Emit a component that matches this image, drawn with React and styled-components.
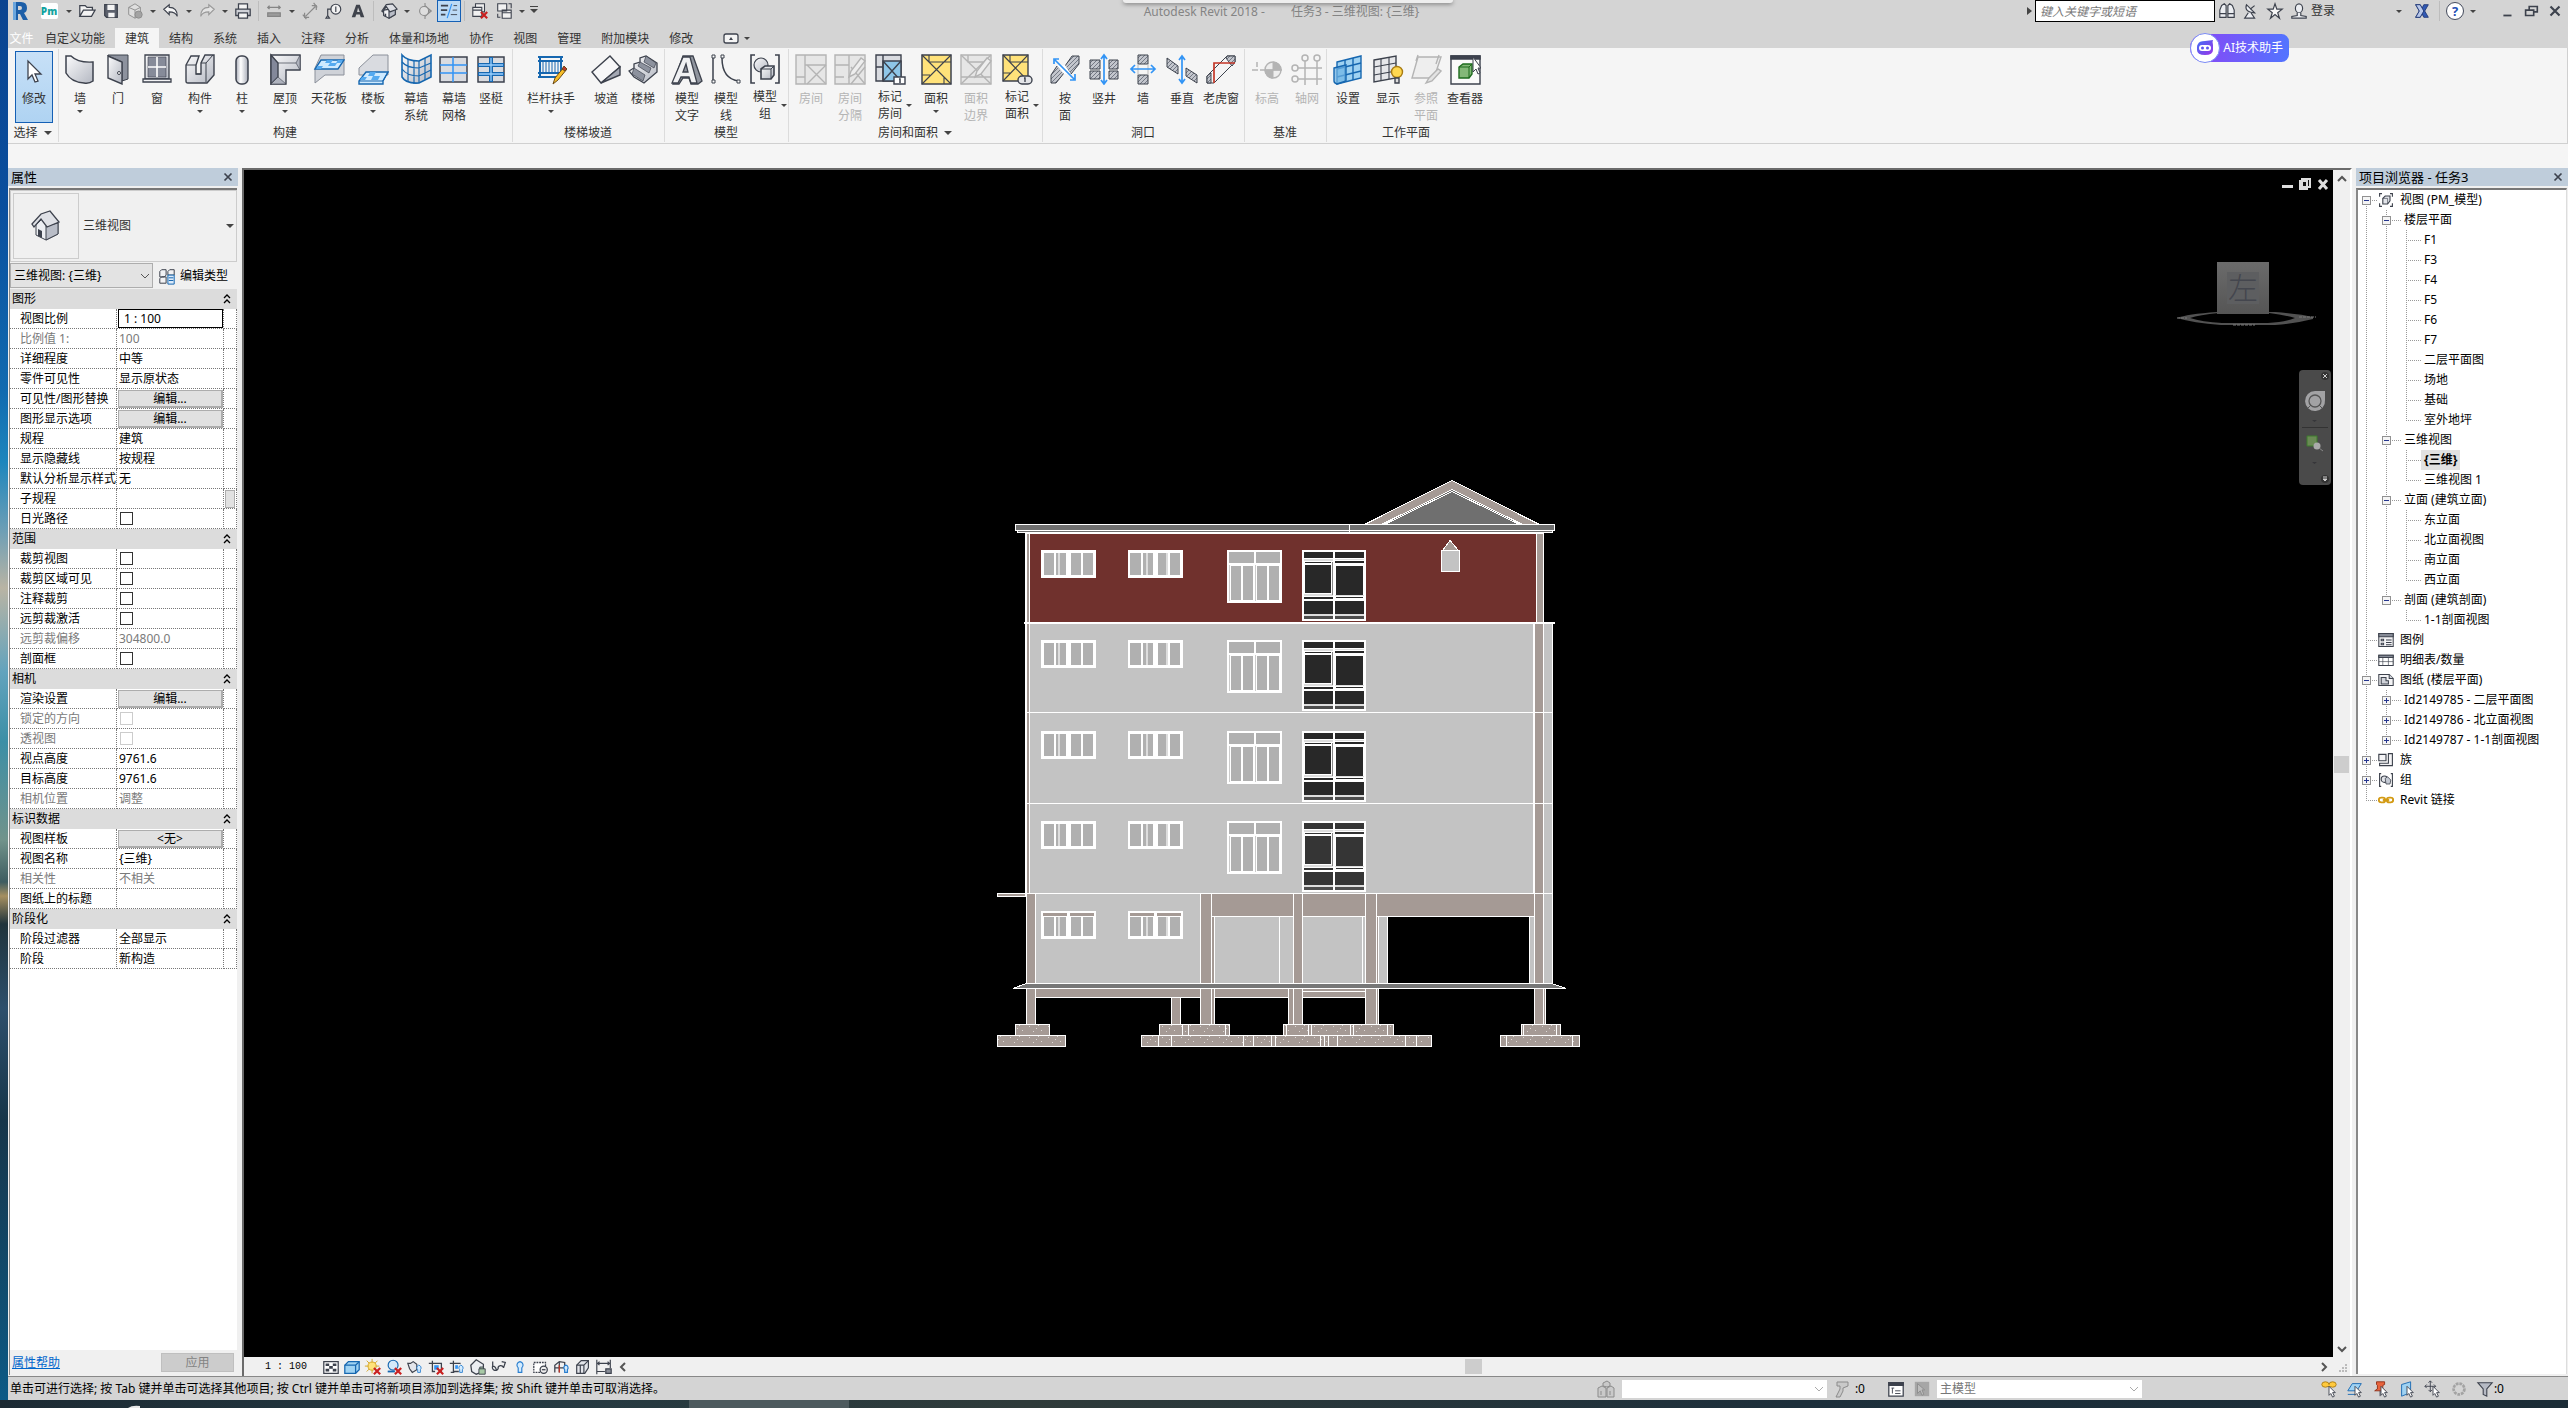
import React, { useState } from 'react'
import styled, { createGlobalStyle, css } from 'styled-components'

const line = '#3d424d'
const off = '#b4b4b4'
const blue = '#1667b0'

/* ---------- ribbon icons, 32 x 32 ---------- */

const pencil = (
  <g>
    <path d="M18 31l2-6 9-11 3 2-9 11z" fill="#f6bd27" stroke="#6b4a16" />
    <path d="M27 16l3 2 2-2-3-3z" fill="#c03a2b" stroke="#6b4a16" />
  </g>
)

const greyPencil = <path d="M15 24l2-6 10-13 4 3-10 13z" fill="#eee" stroke={off} />

const hatch = (d) => <path d={d} fill="url(#hatch)" stroke={line} />

const ribbonIcons = {
  modify: <path d="M10 8v18l4-4 3 7 3-1-3-7h6z" fill="#fff" stroke={line} strokeWidth="1.3" />,
  wall: <path d="M2 3h5q7 7 22 6v19q-4 3-9 2Q7 29 2 20z" fill="url(#steel)" stroke={line} strokeWidth="1.5" />,
  door: (
    <g stroke={line}>
      <path d="M6 2h20v24l-6 2V9L6 3z" fill="#8d929e" />
      <path d="M6 3l14 6v22L6 25z" fill="url(#steel)" strokeWidth="1.4" />
      <circle cx="17" cy="20" r="1.5" fill="#fff" />
    </g>
  ),
  window: (
    <g stroke={line} strokeWidth="1.3">
      <path d="M4 2h24v24H4z" fill="url(#steel)" />
      <path d="M7 4h18v20H7z" fill="#868b99" strokeWidth=".6" />
      <path d="M16 4v20M7 14h18" stroke="#fff" strokeWidth="1.6" />
      <path d="M2 26h28v3H2z" fill="#f3f3f5" />
    </g>
  ),
  component: (
    <g stroke={line} strokeWidth="1.4">
      <path d="M2 12l5-9h8l-3 9v9h5V10l4-8h9v20l-7 8H4q-2 0-2-2z" fill="url(#steel)" />
      <path d="M12 21h5M17 10h5l7-8M22 10v19M2 12h10" fill="none" strokeWidth="1" />
    </g>
  ),
  column: <rect x="10" y="3" width="12" height="28" rx="5" fill="url(#pillar)" stroke={line} strokeWidth="1.5" />,
  roof: (
    <g stroke={line} strokeWidth="1.4">
      <path d="M2 2h29v15H17v14H2z" fill="url(#steel)" />
      <path d="M2 2l7 8v14l-7 7z" fill="#83889a" />
      <path d="M2 31l7-7 8 7zM31 2v15l-4-7z" fill="#aeb2bd" strokeWidth=".6" />
      <path d="M9 10h18" strokeWidth=".7" />
    </g>
  ),
  ceiling: (
    <g>
      <path d="M2 15L8 2h23v20H12L2 30z" fill="#cfd2d8" stroke="#8b909a" />
      <path d="M8 7h23l-6 9H2z" fill="#cfeaff" stroke={blue} strokeWidth="1.4" />
      <path d="M14 7h6l-2 3h6l-2 3h-7l2-3h-5zM5 13h5l-2 3H3zM25 7h5l-2 3h-5z" fill="#55aaf0" />
    </g>
  ),
  floor: (
    <g>
      <path d="M2 22V15L16 2h15v20z" fill="#d9dbe0" stroke="#8b909a" />
      <path d="M9 19h22l-5 9v3H2v-3z" fill="#cfeaff" stroke={blue} strokeWidth="1.4" />
      <path d="M2 28h24l5-9" fill="none" stroke={blue} />
      <path d="M13 19h6l-2 4h6l-2 4h-7l2-4h-5zM5 24h5l-2 3H3z" fill="#55aaf0" />
    </g>
  ),
  curtainSystem: (
    <g fill="none" stroke={blue} strokeWidth="1.6">
      <path d="M2 2q5 6 17 6l12-6v22l-12 6Q6 31 2 24z" fill="url(#steel)" />
      <path d="M2 9q5 6 17 6l12-5M2 16q5 7 17 7l12-6M8 6v22M14 8v23M19 8v22M25 5v22" strokeWidth="1.2" />
    </g>
  ),
  curtainGrid: (
    <g>
      <path d="M2 4h27v25H2z" fill="#d9dbe0" stroke={line} strokeWidth="1.5" />
      <path d="M15 4v25M2 12h27M2 20h27" stroke="#3294f5" strokeWidth="1.5" />
    </g>
  ),
  mullion: (
    <g>
      <path d="M3 4h26v25H3z" fill="#d9dbe0" stroke={line} strokeWidth="1.5" />
      <path d="M3 12h26M3 21h26M16 4v25" stroke={blue} strokeWidth="4" />
      <path d="M4 12h24M4 21h24M16 5v23" stroke="#9ad0ff" strokeWidth="1.3" />
    </g>
  ),
  railing: (
    <g>
      <path d="M3 4h25M3 8h25M3 20h25M3 24h21M5 4v20M26 4v16" stroke={blue} strokeWidth="2" />
      <path d="M8 8v12M11 8v12M14 8v12M17 8v12M20 8v12M23 8v12" stroke={blue} />
      {pencil}
    </g>
  ),
  ramp: (
    <g stroke={line} strokeWidth="1.4">
      <path d="M2 19L20 3l10 11-19 16z" fill="#f7f7f8" />
      <path d="M30 14v8l-19 8z" fill="#a4a8b3" />
    </g>
  ),
  stair: (
    <g stroke={line} strokeWidth="1.3">
      <path d="M2 18l5-3v-4l6-2V5l6-2 11 7v9L17 30 7 24z" fill="url(#steel)" />
      <path d="M19 3l10 7-2 5-10-6zM13 9l11 6-2 5-11-7zM7 15l11 7-2 6-11-7z" fill="#8d929e" strokeWidth=".7" />
    </g>
  ),
  modelText: (
    <g stroke={line} strokeWidth="1.3">
      <path d="M12 3h10l9 25-4 3h-7l-2-6h-6l-4 6H2z" fill="#90959f" />
      <path d="M12 4h7l7 26h-6l-2-6h-8l-3 6H1z" fill="#f0f1f3" />
      <path d="M12 19l3-8 2 8z" fill="#90959f" />
    </g>
  ),
  modelLine: (
    <g fill="none" stroke={line} strokeWidth="1.5">
      <path d="M3 5v23M12 5q0 21 17 23" />
      <path d="M2 2h3v3H2zM2 27h3v3H2zM11 2h3v3h-3zM27 27h3v3h-3z" fill="#fff" strokeWidth="1" />
    </g>
  ),
  modelGroup: (
    <g fill="none" stroke={line} strokeWidth="1.6">
      <path d="M6 2H2v28h4M26 2h4v28h-4" />
      <circle cx="12" cy="12" r="7" fill="url(#steel)" strokeWidth="1.2" />
      <path d="M12 16l4-3h9v9l-3 4H12z" fill="url(#steel)" />
      <path d="M12 16h10v10M22 16l3-3" strokeWidth="1" />
    </g>
  ),
  room: (
    <g fill="none" stroke={off} strokeWidth="1.4">
      <path d="M1 2h30v29H1z" fill="#e6e6e6" />
      <path d="M10 2v29M1 24h9M10 12h21M12 12l19 19M31 12L12 31" />
    </g>
  ),
  roomSplit: (
    <g fill="none" stroke={off} strokeWidth="1.4">
      <path d="M1 2h30v29H1z" fill="#e6e6e6" />
      <path d="M1 12h14M15 2v29M1 24h9M17 14l14 17M31 14L17 31" />
      {greyPencil}
    </g>
  ),
  tagRoom: (
    <g fill="none" stroke={line} strokeWidth="1.4">
      <path d="M2 2h25v26H2z" fill="#d9dbe0" />
      <path d="M9 8h18v20H9z" fill="#8ec6e8" />
      <path d="M9 8l18 20M27 8L9 28M9 2v26M2 14h7" />
      <path d="M20 24h11v7H20z" fill="#fff" />
      <path d="M25 26h1v4" strokeWidth="1.5" />
    </g>
  ),
  area: (
    <g fill="none" stroke={line} strokeWidth="1.5">
      <path d="M2 2h29v29H2z" fill="#ffe27a" />
      <path d="M2 2l29 29M31 2L2 31M9 2v7M9 9h22M2 22h8M24 24v7" strokeWidth="1.1" />
    </g>
  ),
  areaBoundary: (
    <g fill="none" stroke={off} strokeWidth="1.4">
      <path d="M1 2h30v29H1z" fill="#e6e6e6" />
      <path d="M1 2l30 29M31 2L1 31M8 2v7h23M1 24h30" />
      {greyPencil}
    </g>
  ),
  tagArea: (
    <g fill="none" stroke={line} strokeWidth="1.4">
      <path d="M2 2h25v26H2z" fill="#ffe27a" />
      <path d="M2 2l25 26M27 2L2 28M9 2v7h18M2 20h7" strokeWidth="1.1" />
      <rect x="17" y="23" width="14" height="8" rx="4" fill="#e4e5e8" />
      <path d="M23 25h1v4" strokeWidth="1.4" />
    </g>
  ),
  byFace: (
    <g>
      {hatch('M16 13L23 3h7v8l-8 10zM2 30v-8l6-9 7 7-8 10z')}
      <path d="M8 13l8-1 6 9h-7z" fill="#fff" />
      <path d="M6 7l19 19M5 11V6h5M26 21v6h-5" fill="none" stroke="#3294f5" strokeWidth="1.7" />
    </g>
  ),
  shaft: (
    <g>
      {hatch('M2 7h10v9H2zM21 7h9v9h-9zM2 18h10v8H2zM21 18h9v8h-9z')}
      <path d="M16 3v27M13 6l3-4 3 4M13 27l3 4 3-4" fill="none" stroke="#3294f5" strokeWidth="1.7" />
    </g>
  ),
  wallOpening: (
    <g>
      {hatch('M11 2h10v9H11zM11 22h10v9H11z')}
      <path d="M11 11v11M21 11v11" stroke="#bbb" />
      <path d="M4 16h24M8 12l-4 4 4 4M24 12l4 4-4 4" fill="none" stroke="#3294f5" strokeWidth="1.7" />
    </g>
  ),
  vertical: (
    <g>
      {hatch('M1 5l11 8v8L1 14zM20 15l11 7v8l-11-7z')}
      <path d="M16 4v25M13 7l3-4 3 4M13 26l3 4 3-4" fill="none" stroke="#3294f5" strokeWidth="1.7" />
    </g>
  ),
  dormer: (
    <g>
      <path d="M2 30v-7L22 3h8v6L9 30z" fill="#f4f4f5" stroke={line} />
      {hatch('M22 3h8v6l-3 4-6-8zM2 30v-7l4-3v10z')}
      <path d="M30 10H9v20" fill="none" stroke="#c33526" strokeWidth="1.7" />
    </g>
  ),
  level: (
    <g stroke={off}>
      <circle cx="22" cy="17" r="8" fill="#eee" strokeWidth="1.4" />
      <path d="M22 17V9a8 8 0 0 1 8 8zM22 17v8a8 8 0 0 1-8-8z" fill={off} />
      <path d="M1 17h6M9 17h22M6 9v5" strokeWidth="1.5" />
    </g>
  ),
  grid: (
    <g fill="none" stroke={off} strokeWidth="1.5">
      <circle cx="14" cy="5" r="3" />
      <circle cx="26" cy="5" r="3" />
      <circle cx="4" cy="15" r="3" />
      <circle cx="4" cy="26" r="3" />
      <path d="M14 8v24M26 8v24M7 15h24M7 26h24" />
    </g>
  ),
  setPlane: (
    <g fill="none" stroke={blue} strokeWidth="1.4">
      <path d="M5 9l24-6v22L5 31z" fill="#9fd2f2" />
      <path d="M13 7v22M21 5v22M5 16l24-6M5 24l24-6" />
      <path d="M2 15l12-3v16L5 31q-3-1-3-3z" fill="#6fb3e4" fillOpacity=".7" />
    </g>
  ),
  showPlane: (
    <g fill="none" stroke={line} strokeWidth="1.4">
      <path d="M2 7l22-4v22L2 29z" fill="#e6e7ea" />
      <path d="M9 6v22M17 4v22M2 14l22-4M2 22l22-4" strokeWidth="1.1" />
      <circle cx="25" cy="19" r="5.5" fill="#ffd850" stroke="#a87b12" />
      <path d="M23 25h4v5h-4z" fill="#ddd" />
    </g>
  ),
  refPlane: (
    <g fill="none" stroke={off} strokeWidth="1.4">
      <path d="M8 4h23l-7 21H2z" fill="#eee" />
      <path d="M8 2l-2 6M29 2l-3 9" />
      <path d="M16 30l3-5 9-9 3 2-9 10z" fill="#e3e3e3" />
    </g>
  ),
  viewer: (
    <g fill="none" stroke={line} strokeWidth="1.4">
      <path d="M2 3h29v28H2z" fill="#fafafa" />
      <path d="M2 3h29v3H2z" fill={line} />
      <path d="M10 14l4-3h9v10l-3 4H10z" fill="#83b878" stroke="#1d6b1d" />
      <path d="M10 14h10v11M20 14l3-3" stroke="#1d6b1d" strokeWidth="1" />
      <path d="M24 4v15l3-3 2 5 2-1-2-5h3z" fill="#fff" strokeWidth="1" />
    </g>
  ),
}

/* ---------- small icons, 20 x 20 ---------- */

const redX = <path d="M11 11l7 7M18 11l-7 7" stroke="#c92020" strokeWidth="2.4" />
const arrowCursor = <path d="M10 7v10l2-2 2 4 2-1-2-4h3z" fill="#fff" stroke={line} />
const lamp = <path d="M14 8a3 3 0 0 1 2 5v3h-3v-3a3 3 0 0 1 1-5z" fill="#d4ecff" stroke="#2a7fcf" />

const smallIcons = {
  revit: (
    <g>
      <path d="M3 1h8q6 0 6 6 0 4-3 5l4 7h-5l-3-6H8v6H3z" fill="#1d5fa8" />
      <path d="M8 5h2q2 0 2 2t-2 2H8z" fill="#d4d4d4" />
      <path d="M3 1h3v18H3z" fill="#6ba6dd" />
    </g>
  ),
  open: <path d="M2 16V4h6l2 2h6v3M2 16l4-7h13l-4 7z" fill="#f3f3f3" stroke={line} strokeWidth="1.4" />,
  save: (
    <g>
      <path d="M3 3h14v14H5l-2-2z" fill="#5b606c" stroke={line} strokeWidth="1.4" />
      <path d="M6 3h8v6H6zM7 12h7v5H7z" fill="#f4f4f4" />
    </g>
  ),
  sync: (
    <g stroke="#8b8b8b" fill="#dedede">
      <path d="M3 6l7-4 6 4v8l-6 4-7-4z" />
      <path d="M3 6l7 3 6-3M10 9v9" fill="none" />
      <circle cx="14" cy="14" r="4" fill="#a3a3a3" />
    </g>
  ),
  undo: <path d="M2 8l6-5v3q9 0 9 10-2-5-9-5v3z" fill="#f6f6f6" stroke={line} strokeWidth="1.3" />,
  redo: <path d="M18 8l-6-5v3q-9 0-9 10 2-5 9-5v3z" fill="#e4e4e4" stroke="#9a9a9a" strokeWidth="1.3" />,
  print: (
    <g stroke={line} strokeWidth="1.4" fill="#f4f4f4">
      <path d="M5 8V2h10v6" />
      <path d="M2 8h16v7H2z" fill="#d0d2d8" />
      <path d="M5 12h10v6H5z" />
    </g>
  ),
  measure: <path d="M3 6h14M5 4L3 6l2 2M15 4l2 2-2 2M3 12h14v4H3z" fill="#9b9b9b" stroke="#858585" strokeWidth="1.3" />,
  dimension: <path d="M5 16L16 5M4 12v5h5M12 4h5v5M2 14l4 5M14 1l4 5" fill="none" stroke="#8a8a8a" strokeWidth="1.3" />,
  tag: (
    <g fill="none" stroke={line} strokeWidth="1.3">
      <circle cx="12" cy="8" r="5.5" fill="#f2f2f2" />
      <path d="M12 5v6M7 8H3v8M1 18l2-3 2 3z" />
    </g>
  ),
  bigA: <path d="M8 3h4l5 14h-4l-1-3H8l-1 3H3zM9 11h3l-2-5z" fill="#3f434c" fillRule="evenodd" />,
  home: (
    <g stroke={line} fill="#f1f1f3" strokeWidth="1.3" strokeLinejoin="round">
      <path d="M4 9v6l6 3 7-4V7z" />
      <path d="M10 10v8l7-4V7z" fill="#b9bdc7" />
      <path d="M2 10l5-7 7-1 5 6-8 3-4-6-4 6z" fill="#dcdee3" />
      <path d="M6 13v3" strokeWidth="1.8" />
    </g>
  ),
  section: (
    <g stroke="#8b8b8b" strokeWidth="1.2">
      <path d="M10 1v3M10 16v3M10 4l7 6-7 6z" fill="#a6a6a6" />
      <circle cx="9" cy="10" r="5" fill="#dedede" />
    </g>
  ),
  thin: (
    <g strokeWidth="2" stroke={line}>
      <path d="M1 4h8M1 9h7M1 14h5" />
      <path d="M15 4h4M14 9h5M12 14h7" strokeWidth="1" />
      <path d="M13 2L8 18" stroke="#3294f5" strokeWidth="1.3" />
    </g>
  ),
  hide: (
    <g fill="#f1f1f1" stroke={line} strokeWidth="1.2">
      <path d="M5 2h10v9H5z" />
      <path d="M2 6h10v10H2zM2 9h10" />
      {redX}
    </g>
  ),
  switchWin: (
    <g fill="#f1f1f1" stroke={line} strokeWidth="1.2">
      <path d="M3 2h10v8H3zM8 9h10v9H8zM8 12h10" />
      <path d="M15 2h3v5M3 13v4h3" fill="none" />
    </g>
  ),
  binoculars: (
    <g fill="#eceef2" stroke={line} strokeWidth="1.3">
      <path d="M4 4l3-2 2 2v13H2V9zM16 4l-3-2-2 2v13h7V9z" />
      <path d="M2 13h7M11 13h7" />
    </g>
  ),
  satellite: (
    <g fill="#eceef2" stroke={line} strokeWidth="1.3">
      <path d="M5 3q-3 8 9 9zM9 8l5-4M7 12l-4 6h11l-4-6" />
    </g>
  ),
  star: <path d="M10 2l2 6h6l-5 4 2 6-5-4-5 4 2-6-5-4h6z" fill="#f7f7f7" stroke={line} strokeWidth="1.3" />,
  user: (
    <g fill="#eceef2" stroke={line} strokeWidth="1.3">
      <ellipse cx="10" cy="7" rx="4" ry="5" />
      <path d="M8 12v3l-6 1v2h16v-2l-6-1v-3" />
    </g>
  ),
  exchange: (
    <g>
      <path d="M3 3h5l2 4 2-4h5l-4 7 4 7h-5l-2-4-2 4H3l4-7z" fill="#3159b4" stroke="#233a78" />
      <path d="M3 3h5l4 7-4 7H3l4-7z" fill="#b9c8ea" stroke="#233a78" />
    </g>
  ),
  min: <path d="M6 14h9v2H6z" fill={line} />,
  restore: <path d="M4 9h9v6H4zM8 9V5h9v6h-4" fill="none" stroke={line} strokeWidth="1.8" />,
  close: <path d="M5 5l10 10M15 5L5 15" stroke={line} strokeWidth="2.4" />,
  toggle: (
    <g>
      <rect x="3" y="6" width="14" height="9" rx="2" fill="#f4f4f4" stroke={line} strokeWidth="1.3" />
      <path d="M8 12l2-3 2 3z" fill={line} />
    </g>
  ),
  editType: (
    <g fill="#f2f2f4" stroke={line} strokeWidth="1.1">
      <path d="M2 5l2-2h5v6l-2 2H2zM11 5l2-2h5v6h-7zM2 13l2-2h5v7H2z" />
      <path d="M11 9h7v10h-7z" fill="#dceafa" stroke={blue} />
      <path d="M12 12h5M12 15h5" stroke={blue} />
    </g>
  ),
  views: (
    <g fill="none" stroke={line} strokeWidth="1.4">
      <path d="M5 2H2v4M15 2h3v4M5 18H2v-4M15 18h3v-4" />
      <path d="M6 8l3-3h6v6l-3 4H6z" fill="#e3e5ea" />
      <path d="M6 8h6v7" strokeWidth=".8" />
    </g>
  ),
  legend: (
    <g fill="#f3f3f5" stroke={line} strokeWidth="1.3">
      <path d="M1 2h18v16H1z" />
      <path d="M1 2h18v4H1z" fill="#868b96" />
      <path d="M4 9h3v2H4zM4 14h3v2H4zM10 10h7M10 13h7M10 16h7" />
    </g>
  ),
  schedule: (
    <g fill="#fff" stroke={line} strokeWidth="1.3">
      <path d="M1 4h18v13H1z" />
      <path d="M1 4h18v3H1z" fill="#868b96" />
      <path d="M1 12h18M6 7v10M13 7v10" strokeWidth=".8" />
    </g>
  ),
  sheet: (
    <g fill="#f3f3f5" stroke={line} strokeWidth="1.3">
      <path d="M1 3h13l5 5v9H1z" />
      <path d="M4 7h6v4h3v4H4zM14 3v5h5" fill="#d0d3da" />
    </g>
  ),
  family: (
    <g fill="#f3f3f5" stroke={line} strokeWidth="1.4">
      <path d="M1 3h9v8H1zM13 2h5v15H2v-3h11z" />
    </g>
  ),
  group: (
    <g fill="none" stroke={line} strokeWidth="1.4">
      <path d="M4 2H2v16h2M16 2h2v16h-2" />
      <circle cx="8" cy="9" r="4" fill="#e3e5ea" />
      <path d="M9 8l3-2 4 4-1 5h-5z" fill="#c5cad4" strokeWidth="1" />
    </g>
  ),
  link: (
    <g fill="none" stroke="#d39a13" strokeWidth="2.4">
      <rect x="1" y="7" width="8" height="6" rx="3" />
      <rect x="11" y="7" width="8" height="6" rx="3" />
      <path d="M6 10h8" />
    </g>
  ),
  detail: (
    <g>
      <path d="M2 4h16v13H2z" fill="#fff" stroke={line} strokeWidth="1.4" />
      <path d="M4 6h4v3H4zM12 6h4v3h-4zM8 9h4v3H8zM4 12h4v3H4zM12 12h4v3h-4z" fill={line} />
    </g>
  ),
  style: (
    <g fill="#9fd2f2" stroke={blue} strokeWidth="1.4">
      <path d="M2 8l4-4h12v9l-4 4H2z" />
      <path d="M2 8h12v9M14 8l4-4" fill="none" />
    </g>
  ),
  sun: (
    <g>
      <path d="M9 1v16M1 9h16M3 3l12 12M15 3L3 15" stroke="#d3a018" />
      <circle cx="9" cy="9" r="4.5" fill="#ffe27a" stroke="#d3a018" />
      {redX}
    </g>
  ),
  shadow: (
    <g>
      <circle cx="9" cy="8" r="5.5" fill="#d4e9fa" stroke={blue} strokeWidth="1.3" />
      <path d="M3 15h8" stroke={blue} strokeWidth="2" />
      {redX}
    </g>
  ),
  render: (
    <g>
      <path d="M2 6h3l3-2 4 3v6l-5 3-3-4z" fill="#e3e5ea" stroke={line} strokeWidth="1.3" />
      {lamp}
    </g>
  ),
  crop: (
    <g>
      <path d="M2 6h14v10M6 3v12h3" fill="none" stroke={line} strokeWidth="1.4" />
      <path d="M8 8h5v5H8z" fill="#3294f5" />
      {redX}
    </g>
  ),
  cropShow: (
    <g>
      <path d="M2 6h12M6 3v12h6M3 16h4" fill="none" stroke={line} strokeWidth="1.4" />
      <path d="M8 8h3v4H8z" fill="#3294f5" />
      {lamp}
    </g>
  ),
  lockView: (
    <g stroke={line}>
      <path d="M2 8l6-6 8 5v8l-8 3-5-3z" fill="#eceef2" strokeWidth="1.4" />
      <path d="M11 12h7v6h-7zM12 12v-2h4v2" fill="#a7c9a5" />
    </g>
  ),
  glasses: <path d="M3 4v5a3 3 0 1 0 6 3 3 3 0 1 1 6-1l2-6-4-1M3 9q3 0 4 4" fill="none" stroke={line} strokeWidth="1.4" />,
  bulb: <path d="M10 4a4 4 0 0 1 2 7v5H8v-5a4 4 0 0 1 2-7z" fill="#d4ecff" stroke="#2a7fcf" strokeWidth="1.3" />,
  worksharing: (
    <g fill="none" stroke={line} strokeWidth="1.4">
      <path d="M2 5h13v11H2z" fill="#fff" strokeDasharray="2 1" />
      <circle cx="13" cy="13" r="4" fill="#eee" />
      <path d="M11 13h4" />
    </g>
  ),
  analytic: (
    <g fill="none" stroke={line} strokeWidth="1.4">
      <path d="M2 16V8l5-4 6 1v9M2 11h11M7 5v11" />
      <path d="M7 8v8" stroke="#c33526" />
      {lamp}
    </g>
  ),
  highlight: (
    <g fill="#e3e5ea" stroke={line} strokeWidth="1.3">
      <path d="M3 8l5-5h8v8l-4 6H3z" />
      <path d="M3 8h8v9M7 8v9M11 8l5-5" fill="none" />
    </g>
  ),
  constraint: (
    <g fill="none" stroke={line} strokeWidth="1.3">
      <path d="M2 2v16M17 2v9M2 6h15M5 4L3 6l2 2M14 4l2 2-2 2M2 15h9" />
      <path d="M12 12h6v5h-6z" fill="#8a8e98" />
    </g>
  ),
  workset: (
    <g fill="#c9c9c9" stroke="#8b8b8b">
      <path d="M2 9l4-2 4 2v9H2zM11 9l4-2 3 2v9h-7zM7 4l4-2 3 2v3l-3 1-4-1z" />
      <path d="M5 12v4M14 12v4" />
    </g>
  ),
  editable: <path d="M4 3h11v4l-5 2v3l-3 6H3l4-8V7H4z" fill="#c9c9c9" stroke="#8b8b8b" />,
  options: (
    <g fill="#fff" stroke={line} strokeWidth="1.4">
      <path d="M2 3h16v15H2z" />
      <path d="M2 3h16v3H2z" fill={line} />
      <path d="M5 9h3M9 12h6M9 15h6M6 9v6" strokeWidth="1" />
    </g>
  ),
  pickOption: (
    <g>
      <path d="M2 2h16v16H2z" fill="#a6a6a6" />
      <path d="M5 4v11l3-3 2 5 2-1-2-5h3z" fill="#bdbdbd" stroke="#8b8b8b" />
    </g>
  ),
  selLink: (
    <g>
      <path d="M2 5q0-3 4-3t4 3q0-3 4-3t4 3-4 3l-4-1-4 1q-4 0-4-3z" fill="#ffc93c" stroke="#a87b12" />
      {arrowCursor}
    </g>
  ),
  selUnder: (
    <g>
      <path d="M2 12l5-8h10l-5 8zM2 16h9" fill="#9fd2f2" stroke={blue} />
      {arrowCursor}
    </g>
  ),
  selPin: (
    <g>
      <path d="M5 2h9v3l-2 1v4l3 2H3l3-2V6L5 5z" fill="#e8633c" stroke="#8d2f16" />
      <path d="M9 12v6" stroke={line} />
      {arrowCursor}
    </g>
  ),
  selFace: (
    <g>
      <path d="M4 5l10-3v12L4 18z" fill="#9fd2f2" stroke={blue} />
      {arrowCursor}
    </g>
  ),
  drag: (
    <g>
      <path d="M7 1v12M1 7h12M5 3l2-2 2 2M5 11l2 2 2-2M3 5L1 7l2 2M11 5l2 2-2 2" fill="none" stroke={line} />
      {arrowCursor}
    </g>
  ),
  ring: <circle cx="10" cy="10" r="6" fill="none" stroke="#a3a3a3" strokeWidth="3" strokeDasharray="3 1" />,
  filter: <path d="M2 3h16l-6 7v8l-4-2v-6z" fill="#b6bac4" stroke={line} strokeWidth="1.2" />,
}

const SmallIcon = ({ name, size = 18 }) => (
  <svg width={size} height={size} viewBox="0 0 20 20" aria-hidden="true">
    {smallIcons[name]}
  </svg>
)

/* ---------- data ---------- */

const quickAccess = [
  'open', 'save', 'sync', '>', 'undo', '>', 'redo', '>', 'print', '|', 'measure', '>', 'dimension', 'tag', 'bigA', '|',
  'home', '>', 'section', '*thin', '|', 'hide', 'switchWin', '>',
]

const tabs = [
  '自定义功能', '建筑', '结构', '系统', '插入', '注释', '分析', '体量和场地', '协作', '视图', '管理', '附加模块', '修改',
]

const ribbonPanels = [
  {
    title: '构建',
    tools: [
      { icon: 'wall', text: ['墙'], w: 42, menu: true },
      { icon: 'door', text: ['门'], w: 34 },
      { icon: 'window', text: ['窗'], w: 44 },
      { icon: 'component', text: ['构件'], w: 42, menu: true },
      { icon: 'column', text: ['柱'], w: 42, menu: true },
      { icon: 'roof', text: ['屋顶'], w: 44, menu: true },
      { icon: 'ceiling', text: ['天花板'], w: 44 },
      { icon: 'floor', text: ['楼板'], w: 44, menu: true },
      { icon: 'curtainSystem', text: ['幕墙', '系统'], w: 42 },
      { icon: 'curtainGrid', text: ['幕墙', '网格'], w: 34 },
      { icon: 'mullion', text: ['竖梃'], w: 40 },
    ],
  },
  {
    title: '楼梯坡道',
    tools: [
      { icon: 'railing', text: ['栏杆扶手'], w: 76, menu: true },
      { icon: 'ramp', text: ['坡道'], w: 34 },
      { icon: 'stair', text: ['楼梯'], w: 40 },
    ],
  },
  {
    title: '模型',
    tools: [
      { icon: 'modelText', text: ['模型', '文字'], w: 44 },
      { icon: 'modelLine', text: ['模型', '线'], w: 34 },
      { icon: 'modelGroup', text: ['模型', '组'], w: 44, side: true },
    ],
  },
  {
    title: '房间和面积',
    more: true,
    tools: [
      { icon: 'room', text: ['房间'], w: 44, disabled: true },
      { icon: 'roomSplit', text: ['房间', '分隔'], w: 34, disabled: true },
      { icon: 'tagRoom', text: ['标记', '房间'], w: 46, side: true },
      { icon: 'area', text: ['面积'], w: 46, menu: true },
      { icon: 'areaBoundary', text: ['面积', '边界'], w: 34, disabled: true },
      { icon: 'tagArea', text: ['标记', '面积'], w: 48, side: true },
    ],
  },
  {
    title: '洞口',
    tools: [
      { icon: 'byFace', text: ['按', '面'], w: 44 },
      { icon: 'shaft', text: ['竖井'], w: 34 },
      { icon: 'wallOpening', text: ['墙'], w: 44 },
      { icon: 'vertical', text: ['垂直'], w: 34 },
      { icon: 'dormer', text: ['老虎窗'], w: 44 },
    ],
  },
  {
    title: '基准',
    tools: [
      { icon: 'level', text: ['标高'], w: 44, disabled: true },
      { icon: 'grid', text: ['轴网'], w: 36, disabled: true },
    ],
  },
  {
    title: '工作平面',
    last: true,
    tools: [
      { icon: 'setPlane', text: ['设置'], w: 42 },
      { icon: 'showPlane', text: ['显示'], w: 38 },
      { icon: 'refPlane', text: ['参照', '平面'], w: 38, disabled: true },
      { icon: 'viewer', text: ['查看器'], w: 40 },
    ],
  },
]

const propertyGroups = [
  {
    name: '图形',
    rows: [
      { name: '视图比例', value: '1 : 100', type: 'input' },
      { name: '比例值 1:', value: '100', disabled: true },
      { name: '详细程度', value: '中等' },
      { name: '零件可见性', value: '显示原状态' },
      { name: '可见性/图形替换', value: '编辑...', type: 'button' },
      { name: '图形显示选项', value: '编辑...', type: 'button' },
      { name: '规程', value: '建筑' },
      { name: '显示隐藏线', value: '按规程' },
      { name: '默认分析显示样式', value: '无' },
      { name: '子规程', value: '', extra: true },
      { name: '日光路径', type: 'check' },
    ],
  },
  {
    name: '范围',
    rows: [
      { name: '裁剪视图', type: 'check' },
      { name: '裁剪区域可见', type: 'check' },
      { name: '注释裁剪', type: 'check' },
      { name: '远剪裁激活', type: 'check' },
      { name: '远剪裁偏移', value: '304800.0', disabled: true },
      { name: '剖面框', type: 'check' },
    ],
  },
  {
    name: '相机',
    rows: [
      { name: '渲染设置', value: '编辑...', type: 'button' },
      { name: '锁定的方向', type: 'check', disabled: true },
      { name: '透视图', type: 'check', disabled: true },
      { name: '视点高度', value: '9761.6' },
      { name: '目标高度', value: '9761.6' },
      { name: '相机位置', value: '调整', disabled: true },
    ],
  },
  {
    name: '标识数据',
    rows: [
      { name: '视图样板', value: '<无>', type: 'button' },
      { name: '视图名称', value: '{三维}' },
      { name: '相关性', value: '不相关', disabled: true },
      { name: '图纸上的标题', value: '' },
    ],
  },
  {
    name: '阶段化',
    rows: [
      { name: '阶段过滤器', value: '全部显示' },
      { name: '阶段', value: '新构造' },
    ],
  },
]

// guides: one letter per level. I = line passes, T = branch, L = last branch, F = first, "." = empty
const tree = [
  { guides: 'F', box: '-', icon: 'views', text: '视图 (PM_模型)' },
  { guides: 'IT', box: '-', text: '楼层平面' },
  { guides: 'IIT', text: 'F1' },
  { guides: 'IIT', text: 'F3' },
  { guides: 'IIT', text: 'F4' },
  { guides: 'IIT', text: 'F5' },
  { guides: 'IIT', text: 'F6' },
  { guides: 'IIT', text: 'F7' },
  { guides: 'IIT', text: '二层平面图' },
  { guides: 'IIT', text: '场地' },
  { guides: 'IIT', text: '基础' },
  { guides: 'IIL', text: '室外地坪' },
  { guides: 'IT', box: '-', text: '三维视图' },
  { guides: 'IIT', text: '{三维}' },
  { guides: 'IIL', text: '三维视图 1' },
  { guides: 'IT', box: '-', text: '立面 (建筑立面)' },
  { guides: 'IIT', text: '东立面' },
  { guides: 'IIT', text: '北立面视图' },
  { guides: 'IIT', text: '南立面' },
  { guides: 'IIL', text: '西立面' },
  { guides: 'IL', box: '-', text: '剖面 (建筑剖面)' },
  { guides: 'I.L', text: '1-1剖面视图' },
  { guides: 'T', icon: 'legend', text: '图例' },
  { guides: 'T', icon: 'schedule', text: '明细表/数量' },
  { guides: 'T', box: '-', icon: 'sheet', text: '图纸 (楼层平面)' },
  { guides: 'IT', box: '+', text: 'Id2149785 - 二层平面图' },
  { guides: 'IT', box: '+', text: 'Id2149786 - 北立面视图' },
  { guides: 'IL', box: '+', text: 'Id2149787 - 1-1剖面视图' },
  { guides: 'T', box: '+', icon: 'family', text: '族' },
  { guides: 'T', box: '+', icon: 'group', text: '组' },
  { guides: 'L', icon: 'link', text: 'Revit 链接' },
]

const viewTools = [
  'detail', 'style', 'sun', 'shadow', 'render', 'crop', 'cropShow', 'lockView', 'glasses', 'bulb', 'worksharing',
  'analytic', 'highlight', 'constraint',
]

/* ---------- building elevation ---------- */

const pink = '#a59a95'
const concrete = '#c3c3c3'
const glass = '#b0b0b0'

const SmallWindow = ({ x, y, second, ground }) => {
  const top = ground ? 6 : 3
  const panes = second
    ? [[2, 11], [15, 3], [20, 5], [30, 8], [42, 10]]
    : [[3, 10], [15, 2], [19, 6], [30, 10], [42, 10]]
  return (
    <g transform={`translate(${x} ${y})`}>
      <rect width="55" height="28" fill="#fff" />
      {panes.map(([px, w]) => (
        <rect key={px} x={px} y={top} width={w} height={25 - top} fill={glass} />
      ))}
      <rect x={second ? 18 : 17} y={top} width="2" height={25 - top} fill="#ddd" />
      {second && <rect x="38" y={top} width="2" height={25 - top} fill="#ddd" />}
      {ground && <path d="M2 2h24v3H2zM29 2h24v3H29z" fill={pink} />}
    </g>
  )
}

const TallWindow = ({ y }) => (
  <g transform={`translate(1227 ${y})`}>
    <rect width="55" height="53" fill="#fff" />
    <path d="M2 2h25v11H2zM29 2h24v11H29zM4 16h10v34H4zM16 16h10v34H16zM30 16h10v34H30zM42 16h10v34H42z" fill={glass} />
    <path d="M2 15v36M28 15v36" stroke="#ccc" />
  </g>
)

const BalconyDoor = ({ y, tone }) => (
  <g transform={`translate(1302 ${y})`}>
    <rect width="64" height="71" fill="#fff" />
    <path d="M2 2h29v6H2zM33 2h29v6H33zM3 12h26v1H3zM33 11h29v2H33z" fill={tone} />
    <path d="M3 15h26v28H3zM34 16h27v29H34zM2 47h29v2H2zM34 47h27v1H34z" fill={tone} />
    <path d="M2 51h29v13H2zM33 51h29v13H33z" fill={tone} />
    <path d="M2 66h29v3H2zM33 66h29v3H33z" fill="#4d4d4d" />
    <path d="M2 9h29v2H2zM33 9h29v1H33zM2 44h29v2H2zM33 45h29v1H33zM2 64h60v2H2z" fill="#ddd" />
    <path d="M30 12v33" stroke="#888" />
    <path d="M32 2v67" stroke="#fff" strokeWidth="2" />
  </g>
)

const footings = [
  { x: 1015, w: 34, y: 1024, cuts: [] },
  { x: 1159, w: 70, y: 1024, cuts: [1182, 1188, 1225] },
  { x: 1283, w: 110, y: 1024, cuts: [1286, 1308, 1311, 1350, 1353, 1387] },
  { x: 1521, w: 39, y: 1024, cuts: [1523, 1556] },
  { x: 997, w: 68, y: 1035, cuts: [] },
  { x: 1141, w: 290, y: 1035, cuts: [1158, 1171, 1243, 1253, 1271, 1275, 1320, 1324, 1328, 1337, 1405, 1416] },
  { x: 1500, w: 79, y: 1035, cuts: [1506, 1572] },
]

const floorTops = [550, 640, 731, 821]

const Building = () => (
  <svg width="585" height="567" viewBox="996 480 585 567" shapeRendering="crispEdges" role="img" aria-label="左立面">
    <g stroke="#fff">
      <path d="M1365.5 524L1452 480.5 1538.5 524z" fill={pink} />
      <path d="M1382.5 524L1452 489.5 1521.5 524z" fill="#6f6f6f" />
      <path d="M1385.5 524L1452 491.5 1518.5 524" fill="none" />
      <path d="M1017.5 530.5h535v2h-535zM1015.5 524.5h539v6h-539z" fill="#6f6f6f" />
      <path d="M1349.5 524v9" />
      <path d="M1025.5 533.5h4v89h-4zM1536.5 533.5h7v89h-7z" fill={pink} />
      <path d="M1029.5 533.5h507v89h-507z" fill="#70312d" />
      <path d="M1441.5 550.5h18v21h-18z" fill={concrete} />
      <path d="M1442.5 550.5l7.5-10 8.5 10z" fill={pink} />
      <path d="M1025.5 623.5h4v270h-4z" fill={pink} />
      <path d="M1029.5 623.5h504v270h-504z" fill={concrete} />
      <path d="M1534.5 623.5h9v361h-9z" fill={pink} />
      <path d="M1543.5 623.5h9v361h-9z" fill={concrete} />
      <path d="M1026 533v360M1534 624v270" strokeWidth="2" />
      <path d="M1024 623h531" strokeWidth="2" />
      <path d="M1026 712.5h527M1026 803.5h527M1026 893.5h527" />
    </g>

    {floorTops.map((y, i) => (
      <g key={y}>
        <SmallWindow x={1041} y={y} />
        <SmallWindow x={1128} y={y} second />
        <TallWindow y={y} />
        <BalconyDoor y={y} tone={i === 3 ? '#353535' : '#282828'} />
      </g>
    ))}

    <g stroke="#fff">
      <path d="M997.5 893.5h28v3h-28z" fill={pink} />
      <path d="M1035.5 893.5h165v90h-165z" fill={concrete} />
      <path d="M1214.5 916.5h65v67h-65zM1279.5 916.5h14v67h-14z" fill={concrete} />
      <path d="M1302.5 916.5h60v67h-60zM1362.5 916.5h3v67h-3zM1378.5 916.5h9v67h-9zM1529.5 916.5h5v67h-5z" fill={concrete} />
      <path d="M1211.5 893.5h82v23h-82zM1302.5 893.5h63v23h-63zM1376.5 893.5h158v23h-158z" fill={pink} />
      <path d="M1035.5 988.5h165v9h-165zM1214.5 988.5h74v9h-74zM1302.5 988.5h63v3h-63zM1302.5 991.5h63v6h-63z" fill={pink} />
      <path d="M1026.5 893.5h9v131h-9zM1200.5 893.5h11v131h-11zM1211.5 916.5h3v108h-3z" fill={pink} />
      <path d="M1293.5 893.5h9v131h-9zM1365.5 893.5h11v131h-11zM1376.5 916.5h2v108h-2z" fill={pink} />
      <path d="M1288.5 988.5h5v36h-5zM1171.5 997.5h9v27h-9zM1534.5 988.5h9v36h-9zM1543.5 988.5h2v36h-2z" fill={pink} />
      <path d="M1026 983.5h526l14 5h-553z" fill="#777" />
      <path d="M1013 988.5h553" />
    </g>
    <SmallWindow x={1041} y={911} ground />
    <SmallWindow x={1128} y={911} second ground />

    {footings.map((f) => (
      <g key={`${f.x}-${f.y}`}>
        <rect x={f.x + 0.5} y={f.y + 0.5} width={f.w} height="11" fill="url(#speck)" stroke="#fff" />
        {f.cuts.map((c) => (
          <path key={c} d={`M${c}.5 ${f.y}v11`} stroke="#fff" />
        ))}
      </g>
    ))}
  </svg>
)

const Defs = () => (
  <HiddenSvg aria-hidden="true">
    <defs>
      <linearGradient id="steel" x1="0" y1="0" x2="1" y2="1">
        <stop offset="0" stopColor="#fbfbfc" />
        <stop offset="1" stopColor="#b4b8c2" />
      </linearGradient>
      <linearGradient id="pillar">
        <stop offset="0" stopColor="#a9adb8" />
        <stop offset=".4" stopColor="#fff" />
        <stop offset="1" stopColor="#a9adb8" />
      </linearGradient>
      <linearGradient id="robot" x1="0" y1="0" x2="1" y2="1">
        <stop offset="0" stopColor="#3f6ff5" />
        <stop offset="1" stopColor="#9b35e8" />
      </linearGradient>
      <pattern id="hatch" width="4" height="4" patternUnits="userSpaceOnUse">
        <path d="M0 0h4v4H0z" fill="#c3c6cd" />
        <path d="M0 4L4 0" stroke="#747985" />
      </pattern>
      <pattern id="speck" width="19" height="11" patternUnits="userSpaceOnUse">
        <path d="M0 0h19v11H0z" fill={pink} />
        <path d="M3 3h1v1H3zM7 8h1v1H7zM12 2h1v1h-1zM15 7h1v1h-1zM10 5h1v1h-1z" fill="#ddd8d5" />
      </pattern>
    </defs>
  </HiddenSvg>
)

/* ---------- sections ---------- */

const TitleBar = () => (
  <TitleRow>
    <QuickButton aria-label="应用程序菜单">
      <SmallIcon name="revit" size={20} />
    </QuickButton>
    <PmButton aria-label="PM">
      <PmBadge>Pm</PmBadge>
    </PmButton>
    <ArrowButton aria-label="更多">
      <Caret />
    </ArrowButton>
    {quickAccess.map((item, i) => {
      if (item === '|') return <Divider key={i} />
      if (item === '>') {
        return (
          <ArrowButton key={i} aria-label="更多">
            <Caret />
          </ArrowButton>
        )
      }
      const active = item[0] === '*'
      const name = active ? item.slice(1) : item
      return (
        <QuickButton key={i} $active={active} aria-label={name}>
          <SmallIcon name={name} />
        </QuickButton>
      )
    })}
    <ArrowButton aria-label="自定义快速访问工具栏">
      <BarCaret />
    </ArrowButton>
    <TitleText>
      <span>Autodesk Revit 2018 -</span>
      <span>任务3 - 三维视图: {'{三维}'}</span>
    </TitleText>
    <ArrowButton aria-label="展开搜索">
      <SideCaret />
    </ArrowButton>
    <SearchBox aria-label="搜索" placeholder="键入关键字或短语" />
    {['binoculars', 'satellite', 'star', 'user'].map((name) => (
      <QuickButton key={name} aria-label={name}>
        <SmallIcon name={name} />
      </QuickButton>
    ))}
    <LoginButton>登录</LoginButton>
    <ArrowButton aria-label="登录选项">
      <Caret />
    </ArrowButton>
    <ExchangeButton aria-label="exchange">
      <SmallIcon name="exchange" />
    </ExchangeButton>
    <Divider />
    <HelpButton aria-label="帮助">?</HelpButton>
    <ArrowButton aria-label="帮助选项">
      <Caret />
    </ArrowButton>
    <WindowButtons>
      {['min', 'restore', 'close'].map((name) => (
        <QuickButton key={name} aria-label={name}>
          <SmallIcon name={name} />
        </QuickButton>
      ))}
    </WindowButtons>
    <PullTab />
  </TitleRow>
)

const Ribbon = () => (
  <RibbonRow>
    <RibbonPanel>
      <ToolRow>
        <ModifyButton>
          <svg width="32" height="32" viewBox="0 0 32 32">
            {ribbonIcons.modify}
          </svg>
          修改
        </ModifyButton>
      </ToolRow>
      <PanelTitle>
        选择 <PanelCaret />
      </PanelTitle>
    </RibbonPanel>
    {ribbonPanels.map((panel) => (
      <RibbonPanel key={panel.title} $last={panel.last}>
        <ToolRow>
          {panel.tools.map((tool) => (
            <ToolButton key={tool.icon} $width={tool.w} disabled={tool.disabled}>
              <svg width="32" height="32" viewBox="0 0 32 32">
                {ribbonIcons[tool.icon]}
              </svg>
              <ToolLabel $side={tool.side}>
                <span>
                  {tool.text.map((t) => (
                    <ToolLine key={t}>{t}</ToolLine>
                  ))}
                </span>
                {tool.side && <Caret />}
              </ToolLabel>
              {tool.menu && <MenuCaret />}
            </ToolButton>
          ))}
        </ToolRow>
        <PanelTitle>
          {panel.title} {panel.more && <PanelCaret />}
        </PanelTitle>
      </RibbonPanel>
    ))}
  </RibbonRow>
)

const PropertyValue = ({ row, id }) => {
  if (row.type === 'input') return <ScaleInput id={id} defaultValue={row.value} />
  if (row.type === 'button') return <EditButton id={id}>{row.value}</EditButton>
  if (row.type === 'check') return <CheckBox id={id} type="checkbox" disabled={row.disabled} />
  return row.value
}

const Properties = () => (
  <SidePanel>
    <PanelHeader>
      属性
      <HeaderClose aria-label="关闭属性">
        <SmallIcon name="close" size={14} />
      </HeaderClose>
    </PanelHeader>
    <PropertiesBody>
      <TypeSelector>
        <TypeImage>
          <svg width="32" height="32" viewBox="0 0 32 32">
            <path d="M6 15v10l10 5 12-6V13L17 4z" fill="#eceef2" stroke={line} />
            <path d="M16 16v14l12-6V13z" fill="#b9bdc7" stroke={line} />
            <path d="M2 14L11 4l9-3 9 11-12 5-6-8-7 8z" fill="#dfe1e6" stroke={line} strokeWidth="1.3" />
            <path d="M8 19l4 2v7l-4-2z" fill={line} />
          </svg>
        </TypeImage>
        <TypeName>三维视图</TypeName>
        <PanelCaret />
      </TypeSelector>
      <InstanceRow>
        <InstanceSelectBox>
          <InstanceSelect aria-label="三维视图" defaultValue="a">
            <option value="a">三维视图: {'{三维}'}</option>
          </InstanceSelect>
          <Chevron />
        </InstanceSelectBox>
        <EditTypeButton>
          <SmallIcon name="editType" />
          编辑类型
        </EditTypeButton>
      </InstanceRow>
      <PropertyTable>
        <colgroup>
          <col />
          <col />
          <NarrowCol />
        </colgroup>
        {propertyGroups.map((group, g) => (
          <tbody key={group.name}>
            <tr>
              <GroupHead colSpan="3">
                <GroupLine>
                  {group.name}
                  <svg width="8" height="10" viewBox="0 0 8 10">
                    <path d="M1 4l3-3 3 3M1 9l3-3 3 3" fill="none" stroke="#000" strokeWidth="1.3" />
                  </svg>
                </GroupLine>
              </GroupHead>
            </tr>
            {group.rows.map((row, r) => {
              const id = `prop-${g}-${r}`
              return (
                <tr key={row.name}>
                  <NameCell $disabled={row.disabled}>
                    {row.type ? <label htmlFor={id}>{row.name}</label> : row.name}
                  </NameCell>
                  <ValueCell $disabled={row.disabled} $flush={row.type === 'input' || row.type === 'button'}>
                    <PropertyValue row={row} id={id} />
                  </ValueCell>
                  <ExtraCell>{row.extra && <ExtraButton aria-label="子规程选项" />}</ExtraCell>
                </tr>
              )
            })}
          </tbody>
        ))}
      </PropertyTable>
      <PropertiesFooter>
        <a href="#help">属性帮助</a>
        <ApplyButton disabled>应用</ApplyButton>
      </PropertiesFooter>
    </PropertiesBody>
  </SidePanel>
)

const ViewArea = () => (
  <ViewFrame>
    <CanvasRow>
      <Canvas>
        <Building />
        <MdiButtons>
          <svg width="48" height="14" viewBox="0 0 48 14">
            <path d="M1 8h11v3H1z" fill="#ddd" />
            <path d="M21 2h8v8h-8zM19 4h7v8h-7z" fill="#111" stroke="#ddd" strokeWidth="2" />
            <path d="M38 3l8 9M46 3l-8 9" stroke="#ddd" strokeWidth="3" />
          </svg>
        </MdiButtons>
        <ViewCube>
          <svg width="142" height="16" viewBox="0 0 142 16">
            <path
              d="M2 7q10-4 40-6h58q26 2 38 5v2q-20 5-38 6H46Q18 12 2 7zm13 0q12 4 32 5h46q18-1 27-5-10-3-26-5H44Q24 4 15 7z"
              fill="#525252"
              fillRule="evenodd"
            />
            <path d="M58 14h22M2 7h10M124 6h17" stroke="#7a7a7a" strokeDasharray="3 1" />
          </svg>
          <CubeFace>
            <CubeLabel>左</CubeLabel>
          </CubeFace>
        </ViewCube>
        <NavBar>
          <svg width="32" height="115" viewBox="0 0 32 115">
            <circle cx="26" cy="6" r="4" fill="#333" />
            <path d="M24 4l4 4M28 4l-4 4" stroke="#ccc" />
            <path d="M16 21h10v9a10 10 0 1 1-10-9z" fill="#a2a2a4" />
            <circle cx="16" cy="31" r="6" fill="none" stroke="#555" strokeWidth="1.3" />
            <path d="M9 38l3-3M23 38l-3-3" stroke="#555" />
            <path d="M13 50h5l-2.5 2z" fill="#36363a" />
            <path d="M3 57.5h26" stroke="#333" />
            <path d="M8 66h10v10H8z" fill="#6a8a55" stroke="#3c7a2c" />
            <circle cx="18" cy="76" r="3.5" fill="#aaa" />
            <path d="M20 78l4 3" stroke="#888" />
            <path d="M13 92h5l-2.5 2z" fill="#36363a" />
            <circle cx="26" cy="109" r="4" fill="#333" />
            <path d="M24 107h4M24 109h4l-2 2z" stroke="#ccc" fill="#ccc" />
          </svg>
        </NavBar>
      </Canvas>
      <VScroll>
        <Chevron $turn={180} $bold />
        <VThumb />
        <Chevron $bold />
      </VScroll>
    </CanvasRow>
    <ViewBar>
      <ScaleText>1 : 100</ScaleText>
      {viewTools.map((name) => (
        <ViewTool key={name} aria-label={name}>
          <SmallIcon name={name} />
        </ViewTool>
      ))}
      <HTrack>
        <Chevron $turn={90} $bold />
        <HThumb />
        <Chevron $turn={-90} $bold />
      </HTrack>
      <Grip width="10" height="10" viewBox="0 0 10 10">
        <path d="M7 0h2v2H7zM4 3h2v2H4zM7 3h2v2H7zM1 6h2v2H1zM4 6h2v2H4zM7 6h2v2H7z" fill="#bbb" />
      </Grip>
    </ViewBar>
  </ViewFrame>
)

const Browser = () => {
  const [selected, setSelected] = useState('{三维}')

  return (
    <BrowserPanel>
      <PanelHeader>
        项目浏览器 - 任务3
        <HeaderClose aria-label="关闭项目浏览器">
          <SmallIcon name="close" size={14} />
        </HeaderClose>
      </PanelHeader>
      <TreeBody role="tree">
        {tree.map((node) => (
          <TreeRow
            key={node.text}
            role="treeitem"
            aria-level={node.guides.length}
            aria-selected={node.text === selected}
            onClick={() => setSelected(node.text)}
          >
            {node.guides.split('').map((kind, level) => (
              <Guide key={level} $kind={kind} $end={level > 0 && level === node.guides.length - 1}>
                {node.box && level === node.guides.length - 1 && (
                  <Expander aria-label="展开">
                    <svg width="7" height="7" viewBox="0 0 7 7">
                      <path d={node.box === '+' ? 'M1 3.5h5M3.5 1v5' : 'M1 3.5h5'} stroke="#25358f" />
                    </svg>
                  </Expander>
                )}
              </Guide>
            ))}
            {node.icon && (
              <TreeIcon>
                <SmallIcon name={node.icon} size={16} />
              </TreeIcon>
            )}
            <TreeLabel $selected={node.text === selected}>{node.text}</TreeLabel>
          </TreeRow>
        ))}
      </TreeBody>
    </BrowserPanel>
  )
}

const Status = () => (
  <StatusBar>
    <StatusText>
      单击可进行选择; 按 Tab 键并单击可选择其他项目; 按 Ctrl 键并单击可将新项目添加到选择集; 按 Shift 键并单击可取消选择。
    </StatusText>
    <StatusCenter>
      <SmallIcon name="workset" size={20} />
      <StatusSelectBox>
        <StatusSelect aria-label="工作集" />
        <Chevron $pale />
      </StatusSelectBox>
      <CountGroup>
        <SmallIcon name="editable" size={20} />
        <span>:0</span>
      </CountGroup>
      <OptionIcons>
        <SmallIcon name="options" />
        <SmallIcon name="pickOption" />
      </OptionIcons>
      <StatusSelectBox>
        <StatusSelect aria-label="设计选项" defaultValue="main">
          <option value="main">主模型</option>
        </StatusSelect>
        <Chevron $pale />
      </StatusSelectBox>
    </StatusCenter>
    <StatusRight>
      {['selLink', 'selUnder', 'selPin', 'selFace', 'drag', 'ring', 'filter'].map((name) => (
        <SelectTool key={name} aria-label={name}>
          <SmallIcon name={name} />
        </SelectTool>
      ))}
      <span>:0</span>
    </StatusRight>
  </StatusBar>
)

const App = () => {
  const [tab, setTab] = useState('建筑')

  return (
    <Screen>
      <GlobalStyle />
      <Defs />
      <Desktop />
      <AppWindow>
        <TitleBar />
        <TabRow>
          <FileTab>文件</FileTab>
          {tabs.map((name) => (
            <Tab key={name} $active={name === tab} onClick={() => setTab(name)}>
              {name}
            </Tab>
          ))}
          <ToggleButton aria-label="最小化功能区">
            <SmallIcon name="toggle" size={20} />
            <Caret />
          </ToggleButton>
        </TabRow>
        <Ribbon />
        <AiButton>
          <AiCircle>
            <svg width="20" height="20" viewBox="0 0 20 20">
              <path d="M3 6q1-3 7-3l8-1q-1 2 0 5v5q0 5-8 5T2 12V9q0-2 1-3z" fill="url(#robot)" />
              <rect x="4" y="7" width="12" height="6" rx="3" fill="#fff" />
              <circle cx="7.5" cy="10" r="1.5" fill="#5a55f0" />
              <circle cx="12.5" cy="10" r="1.5" fill="#5a55f0" />
            </svg>
          </AiCircle>
          AI技术助手
        </AiButton>
        <OptionsBar />
        <Workspace>
          <Properties />
          <ViewArea />
          <Browser />
        </Workspace>
        <Status />
      </AppWindow>
      <Taskbar>
        <TaskLeft>
          <svg width="12" height="4" viewBox="0 0 12 4">
            <path d="M0 4q4-3 12-2v2z" fill="#e8e8e8" />
          </svg>
        </TaskLeft>
        <TaskActive />
      </Taskbar>
    </Screen>
  )
}

/* ---------- styles ---------- */

const GlobalStyle = createGlobalStyle`
  * {
    box-sizing: border-box;
  }

  body {
    margin: 0;
    overflow: hidden;
    background: #f0f0f0;
    font-family: "Noto Sans", "Noto Sans CJK SC", sans-serif;
    font-size: 12px;
    line-height: 16px;
    color: #000;
  }

  button, input, select {
    margin: 0;
    padding: 0;
    border: 0;
    background: none;
    color: inherit;
    font: inherit;
  }

  svg {
    display: block;
    flex: none;
  }
`

const HiddenSvg = styled.svg`
  position: absolute;
  width: 0;
  height: 0;
`

const Screen = styled.div`
  display: grid;
  grid-template-columns: 8px minmax(0, 1fr);
  grid-template-rows: minmax(0, 1fr) 8px;
  height: 100vh;
`

const Desktop = styled.div`
  background: linear-gradient(
    #0b4490 0%, #0a4f9e 15%, #116bb0 28%, #1d86bd 33%, #6f9fb5 38%, #b9b4a4 42%, #62a3bd 48%,
    #3c8fa6 53%, #71938b 60%, #3e5c60 63%, #a58f60 64%, #20343c 66%, #2d4f6c 72%, #17364a 80%, #0c5a86 100%
  );
`

const AppWindow = styled.div`
  position: relative;
  display: flex;
  flex-direction: column;
  min-width: 0;
  background: #f0f0f0;
`

const TitleRow = styled.header`
  position: relative;
  display: flex;
  align-items: flex-start;
  height: 28px;
  padding-right: 1px;
  background: #d4d4d4;
`

const QuickButton = styled.button`
  display: flex;
  align-items: center;
  justify-content: center;
  flex: none;
  width: 24px;
  height: 22px;
  ${(p) =>
    p.$active &&
    css`
      background: #bcdaf5;
      border: 1px solid #1560b5;
    `}
`

const PmButton = styled(QuickButton)`
  width: 28px;
  margin-left: 3px;
`

const PmBadge = styled.span`
  width: 17px;
  height: 16px;
  border-radius: 2px;
  background: #fff;
  color: #15a3a0;
  font-size: 10px;
  font-weight: 900;
`

const ArrowButton = styled.button`
  display: flex;
  align-items: center;
  justify-content: center;
  flex: none;
  width: 12px;
  height: 22px;
`

const Caret = styled.i`
  flex: none;
  border: 3px solid transparent;
  border-top: 3px solid #444;
  border-bottom: 0;
`

const BarCaret = styled.i`
  border: 4px solid transparent;
  border-top: 4px solid #444;
  border-bottom: 0;

  &::before {
    content: "";
    display: block;
    width: 8px;
    height: 1px;
    margin: -7px -4px 6px;
    background: #444;
  }
`

const SideCaret = styled.i`
  border: 4px solid transparent;
  border-left: 5px solid #444;
  border-right: 0;
`

const Divider = styled.span`
  flex: none;
  width: 1px;
  height: 20px;
  margin: 1px 3px;
  background: #bdbdbd;
`

const TitleText = styled.h1`
  display: flex;
  flex: 1;
  justify-content: center;
  gap: 26px;
  margin: 0;
  padding-top: 4px;
  font-size: 12px;
  font-weight: 400;
  color: #848484;
  white-space: nowrap;
`

const SearchBox = styled.input`
  width: 180px;
  height: 22px;
  padding: 0 4px;
  background: #fff;
  border: 1px solid #000;

  &::placeholder {
    color: #777;
    font-style: italic;
  }
`

const LoginButton = styled.button`
  width: 82px;
  height: 22px;
  text-align: left;
  color: #333;
`

const ExchangeButton = styled(QuickButton)`
  margin: 0 2px 0 5px;
`

const HelpButton = styled.button`
  width: 18px;
  height: 18px;
  margin: 2px 3px;
  border: 1px solid #434a5c;
  border-radius: 50%;
  background: #fff;
  color: #2350b4;
  font-size: 13px;
  font-weight: 700;
  line-height: 14px;
`

const WindowButtons = styled.div`
  display: flex;
  margin-left: 16px;
`

const PullTab = styled.span`
  position: absolute;
  top: 0;
  left: calc(50% - 165px);
  width: 330px;
  height: 3px;
  border-radius: 0 0 6px 6px;
  background: #eee;
  box-shadow: 0 1px 4px rgba(0, 0, 0, 0.5);
`

const TabRow = styled.nav`
  display: flex;
  height: 20px;
  background: #d4d4d4;
`

const Tab = styled.button`
  padding: 1px 10px 0;
  background: ${(p) => (p.$active ? '#f5f5f5' : 'transparent')};
  color: #333;
  line-height: 20px;
  white-space: nowrap;
`

const FileTab = styled(Tab)`
  width: 27px;
  padding: 1px 0 0;
  color: #fff;
`

const ToggleButton = styled.button`
  display: flex;
  align-items: center;
  gap: 3px;
  margin-left: 18px;
`

const RibbonRow = styled.section`
  display: flex;
  height: 96px;
  background: #f5f5f5;
  border-bottom: 1px solid #d0d0d0;
  border-right: 1px solid #d0d0d0;
`

const RibbonPanel = styled.div`
  display: flex;
  flex-direction: column;
  flex: none;
  justify-content: space-between;
  margin: 1px 0;
  padding: 2px 1px 1px 0;
  border-right: 1px solid ${(p) => (p.$last ? 'transparent' : '#dcdcdc')};
`

const ToolRow = styled.div`
  display: flex;
  align-items: flex-start;
`

const ModifyButton = styled.button`
  display: flex;
  flex-direction: column;
  align-items: center;
  gap: 6px;
  width: 38px;
  height: 72px;
  margin: 0 4px 0 7px;
  padding-top: 1px;
  background: linear-gradient(#c7e0f7, #afd3f2);
  border: 1px solid #1560b5;
  color: #333;
`

const ToolButton = styled.button`
  display: flex;
  flex-direction: column;
  align-items: center;
  flex: none;
  width: ${(p) => p.$width}px;
  padding-top: 2px;
  color: ${(p) => (p.disabled ? '#b4b4b4' : '#333')};
`

const ToolLabel = styled.span`
  display: flex;
  align-items: center;
  gap: 4px;
  margin-top: ${(p) => (p.$side ? 3 : 5)}px;
  padding-left: ${(p) => (p.$side ? 10 : 0)}px;
  white-space: nowrap;
`

const ToolLine = styled.span`
  display: block;
  line-height: 17px;
`

const MenuCaret = styled(Caret)`
  margin-top: 3px;
`

const PanelTitle = styled.div`
  display: flex;
  align-items: center;
  justify-content: center;
  gap: 6px;
  color: #333;
`

const PanelCaret = styled.i`
  flex: none;
  border: 4px solid transparent;
  border-top: 4px solid #444;
  border-bottom: 0;
`

const AiButton = styled.button`
  position: absolute;
  top: 34px;
  right: 279px;
  display: flex;
  align-items: center;
  gap: 3px;
  height: 28px;
  padding-right: 6px;
  border-radius: 15px 8px 8px 15px;
  background: linear-gradient(90deg, #8b45f5, #5274ff);
  color: #fff;
  white-space: nowrap;
`

const AiCircle = styled.span`
  display: flex;
  align-items: center;
  justify-content: center;
  width: 30px;
  height: 30px;
  border: 1px solid #7b8bf5;
  border-radius: 50%;
  background: #fff;
`

const OptionsBar = styled.div`
  height: 24px;
  background: #f5f5f5;
`

const Workspace = styled.main`
  display: flex;
  gap: 4px;
  flex: 1;
  min-height: 0;
`

const SidePanel = styled.aside`
  display: flex;
  flex-direction: column;
  flex: none;
  width: 230px;
`

const BrowserPanel = styled(SidePanel)`
  width: 212px;
`

const PanelHeader = styled.h2`
  display: flex;
  align-items: center;
  justify-content: space-between;
  flex: none;
  height: 18px;
  margin: 0 0 2px;
  padding: 0 3px;
  background: #bfcddb;
  font-size: 13px;
  font-weight: 400;
  line-height: 18px;
`

const HeaderClose = styled.button`
  width: 14px;
  height: 14px;
`

const PropertiesBody = styled.div`
  display: flex;
  flex-direction: column;
  flex: 1;
  min-height: 0;
  margin: 0 1px 1px;
  border-left: 1px solid #888;
  border-top: 2px solid #777;
  background: #fff;
`

const TypeSelector = styled.div`
  display: flex;
  align-items: center;
  flex: none;
  height: 72px;
  padding: 2px;
  background: #f0f0f0;
  border: 1px solid #ccc;
`

const TypeImage = styled.div`
  display: flex;
  align-items: center;
  justify-content: center;
  width: 66px;
  height: 66px;
  border: 1px solid #ccc;
`

const TypeName = styled.span`
  flex: 1;
  padding-left: 4px;
  color: #333;
`

const InstanceRow = styled.div`
  display: flex;
  flex: none;
  height: 27px;
  padding: 1px 0;
  background: #f0f0f0;
`

const InstanceSelectBox = styled.div`
  position: relative;
  width: 143px;
`

const InstanceSelect = styled.select`
  appearance: none;
  width: 100%;
  height: 25px;
  padding: 0 3px;
  background: #e3e3e3;
  border: 1px solid #adadad;
`

const Chevron = styled(({ className }) => (
  <svg className={className} width="10" height="10" viewBox="0 0 10 10">
    <path d="M1 3l4 4 4-4" fill="none" />
  </svg>
))`
  transform: rotate(${(p) => p.$turn || 0}deg);
  stroke: ${(p) => (p.$pale ? '#aaa' : '#555')};
  stroke-width: ${(p) => (p.$bold ? 2 : 1)};

  select + & {
    position: absolute;
    top: calc(50% - 5px);
    right: 3px;
  }
`

const EditTypeButton = styled.button`
  display: flex;
  align-items: center;
  gap: 4px;
  padding-left: 5px;
  white-space: nowrap;
`

const PropertyTable = styled.table`
  width: 100%;
  table-layout: fixed;
  border-spacing: 0;

  td, th {
    height: 20px;
    padding: 0;
    font-weight: 400;
    line-height: 16px;
    text-align: left;
    white-space: nowrap;
  }
`

const NarrowCol = styled.col`
  width: 13px;
`

const GroupHead = styled.th`
  background: #dcdcdc;
`

const GroupLine = styled.div`
  display: flex;
  align-items: center;
  justify-content: space-between;
  padding: 0 6px 0 2px;
`

const cell = css`
  border-right: 1px dotted #777;
  border-bottom: 1px dotted #777;
  color: ${(p) => (p.$disabled ? '#7a7a7a' : '#000')};
`

const NameCell = styled.td`
  ${cell}

  && {
    padding-left: 10px;
  }
`

const ValueCell = styled.td`
  ${cell}

  && {
    padding-left: ${(p) => (p.$flush ? 1 : 2)}px;
  }
`

const ExtraCell = styled.td`
  ${cell}
`

const ScaleInput = styled.input`
  display: block;
  width: 100%;
  height: 19px;
  padding: 0 5px;
  border: 1px solid #000;
`

const EditButton = styled.button`
  display: block;
  width: 100%;
  height: 18px;
  background: #e1e1e1;
  border: 1px solid #adadad;
  border-width: 1px 2px 2px 1px;
  line-height: 15px;
`

const CheckBox = styled.input`
  display: block;
  appearance: none;
  width: 13px;
  height: 13px;
  margin-left: 1px;
  background: #fff;
  border: 1px solid ${(p) => (p.disabled ? '#ccc' : '#333')};
`

const ExtraButton = styled.button`
  display: block;
  width: 10px;
  height: 18px;
  margin-left: 1px;
  background: #e1e1e1;
  border: 1px solid #adadad;
`

const PropertiesFooter = styled.div`
  display: flex;
  align-items: center;
  justify-content: space-between;
  height: 25px;
  margin-top: auto;
  padding: 0 3px 0 2px;
  background: #f0f0f0;

  a {
    color: #0066cc;
  }
`

const ApplyButton = styled.button`
  width: 73px;
  height: 19px;
  background: #ccc;
  border: 1px solid #bfbfbf;
  color: #838383;
  line-height: 16px;
`

const ViewFrame = styled.section`
  display: flex;
  flex-direction: column;
  flex: 1;
  min-width: 0;
  border-top: 2px solid #6b6b6b;
  border-left: 2px solid #6b6b6b;
  border-right: 2px solid #fff;
`

const CanvasRow = styled.div`
  display: flex;
  flex: 1;
  min-height: 0;
`

const Canvas = styled.div`
  position: relative;
  display: flex;
  align-items: center;
  justify-content: center;
  flex: 1;
  background: #000;
`

const MdiButtons = styled.div`
  position: absolute;
  top: 7px;
  right: 4px;
`

const ViewCube = styled.div`
  position: absolute;
  top: 92px;
  right: 16px;
  display: flex;
  flex-direction: column-reverse;
  align-items: center;
  width: 142px;

  svg {
    margin-top: -3px;
  }
`

const CubeFace = styled.div`
  position: relative;
  width: 52px;
  height: 52px;
  margin-right: 6px;
  padding: 10px;
  background: linear-gradient(#6b6b6b, #555);
`

const CubeLabel = styled.span`
  display: block;
  background: #5d5e60;
  color: #44464e;
  font-size: 30px;
  font-weight: 300;
  line-height: 32px;
  text-align: center;
`

const NavBar = styled.div`
  position: absolute;
  top: 200px;
  right: 2px;
  border-radius: 4px;
  background: #4a4a4a;
`

const VScroll = styled.div`
  display: flex;
  flex-direction: column;
  align-items: center;
  justify-content: space-between;
  width: 17px;
  padding: 4px 0 3px;
  background: #f0f0f0;
`

const VThumb = styled.span`
  width: 15px;
  height: 17px;
  background: #cdcdcd;
`

const ViewBar = styled.div`
  display: flex;
  align-items: center;
  flex: none;
  height: 19px;
  background: #f0f0f0;
`

const ScaleText = styled.span`
  width: 76px;
  padding-left: 21px;
  font-family: "Liberation Mono", monospace;
  font-size: 10px;
  white-space: nowrap;
`

const ViewTool = styled.button`
  display: flex;
  align-items: center;
  justify-content: center;
  flex: none;
  width: 21px;
  height: 18px;
`

const SelectTool = styled(ViewTool)`
  justify-content: flex-end;
  width: 26px;
`

const HTrack = styled.div`
  display: flex;
  align-items: center;
  justify-content: space-between;
  flex: 1;
  margin-left: 4px;
`

const HThumb = styled.span`
  width: 17px;
  height: 15px;
  background: #cdcdcd;
`

const Grip = styled.svg`
  margin: 4px 2px 0 9px;
`

const TreeBody = styled.div`
  flex: 1;
  margin-right: 1px;
  margin-bottom: 2px;
  background: #fff;
  border-left: 2px solid #888;
  border-top: 2px solid #777;
  border-right: 1px solid #ddd;
`

const TreeRow = styled.div`
  display: flex;
  align-items: center;
  height: 20px;
`

const vertical = 'repeating-linear-gradient(#999 0 1px, transparent 1px 2px)'
const horizontal = 'repeating-linear-gradient(90deg, #999 0 1px, transparent 1px 2px)'

const guides = {
  '.': 'none',
  I: `${vertical} 8px 0 / 1px 100% no-repeat`,
  T: `${vertical} 8px 0 / 1px 100% no-repeat, ${horizontal} 8px 10px / 100% 1px no-repeat`,
  L: `${vertical} 8px 0 / 1px 10px no-repeat, ${horizontal} 8px 10px / 100% 1px no-repeat`,
  F: `${vertical} 8px 10px / 1px 10px no-repeat, ${horizontal} 8px 10px / 100% 1px no-repeat`,
}

const Guide = styled.span`
  display: flex;
  align-items: center;
  flex: none;
  width: ${(p) => (p.$end ? 23 : 20)}px;
  height: 20px;
  padding-left: 4px;
  background: ${(p) => guides[p.$kind]};
`

const Expander = styled.button`
  display: flex;
  align-items: center;
  justify-content: center;
  width: 9px;
  height: 9px;
  background: #f4f4f4;
  border: 1px solid #919191;
`

const TreeIcon = styled.span`
  margin-right: 3px;
`

const TreeLabel = styled.span`
  padding: 0 3px;
  line-height: 20px;
  white-space: nowrap;
  ${(p) =>
    p.$selected &&
    css`
      background: #e1e1e1;
      font-weight: 700;
    `}
`

const StatusBar = styled.footer`
  display: flex;
  align-items: center;
  height: 24px;
  border-top: 1px solid #888;
  background: #d4d4d4;
`

const StatusText = styled.span`
  flex: 1;
  padding-left: 2px;
  white-space: nowrap;
`

const StatusCenter = styled.div`
  display: flex;
  align-items: center;
  gap: 6px;
`

const StatusSelectBox = styled.div`
  position: relative;
  width: 205px;
`

const StatusSelect = styled.select`
  appearance: none;
  display: block;
  width: 100%;
  height: 18px;
  padding: 0 3px;
  background: #fff;
  color: #777;
`

const CountGroup = styled.span`
  display: flex;
  align-items: center;
  gap: 2px;
`

const OptionIcons = styled.span`
  display: flex;
  gap: 8px;
  margin-left: 16px;
`

const StatusRight = styled.div`
  display: flex;
  align-items: center;
  justify-content: flex-end;
  width: 426px;
  padding-right: 64px;
`

const Taskbar = styled.div`
  grid-column: 1 / -1;
  display: flex;
  align-items: flex-end;
  background: linear-gradient(90deg, #1c2a33, #243942 20%, #2f3b3a 40%, #1d2f3b 70%, #1b2c36);
`

const TaskLeft = styled.div`
  width: 689px;
  padding-left: 128px;
`

const TaskActive = styled.div`
  width: 160px;
  height: 8px;
  background: #4d5a5e;
`

export default App
